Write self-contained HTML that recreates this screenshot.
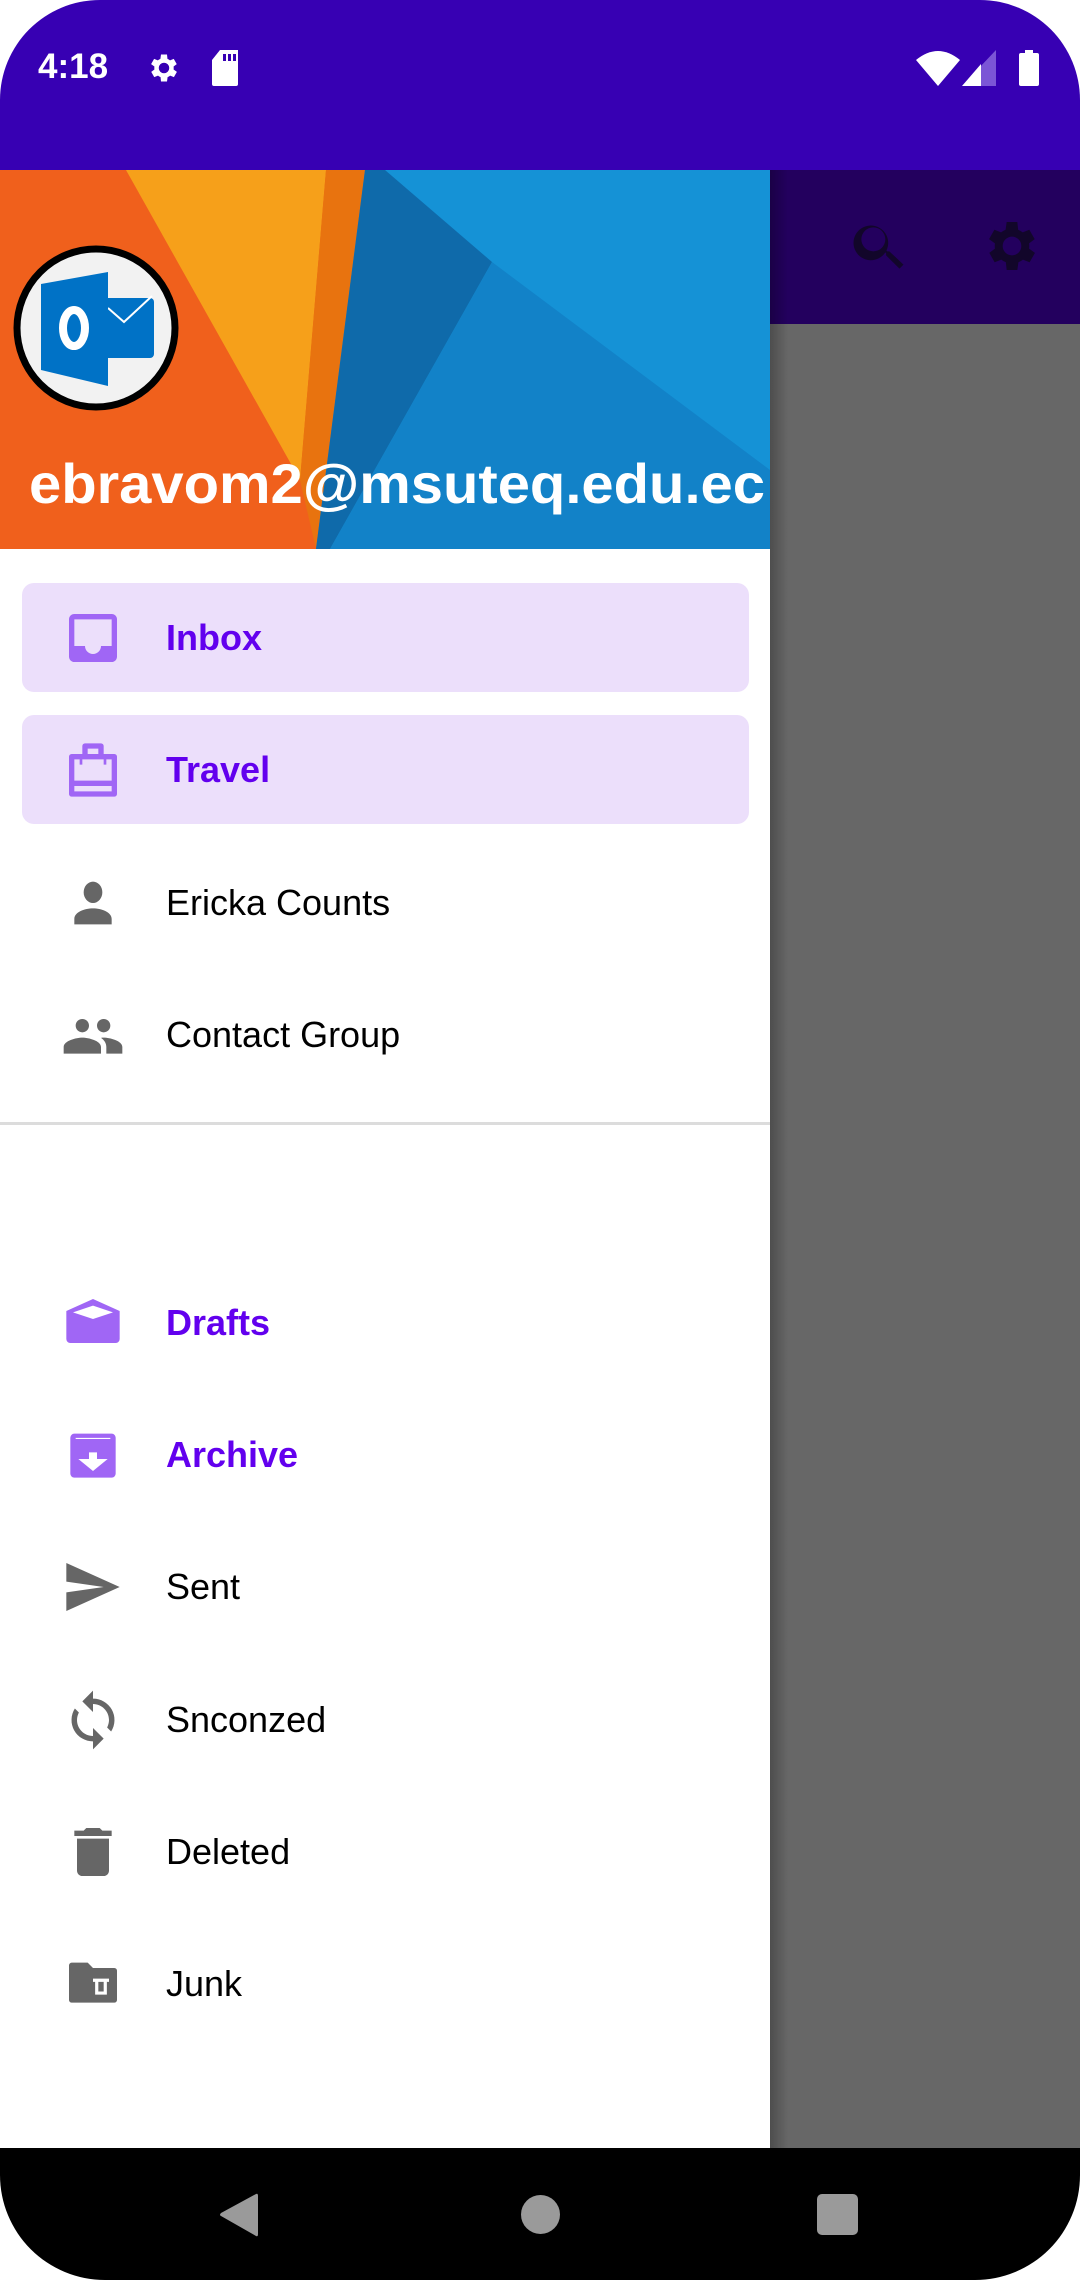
<!DOCTYPE html>
<html><head><meta charset="utf-8"><style>
html,body{margin:0;padding:0;background:#fff}
body{width:1080px;height:2280px;position:relative;overflow:hidden;font-family:"Liberation Sans",sans-serif}
.abs{position:absolute}
.item{position:absolute;left:0;width:770px;height:110px}
.item .t{position:absolute;left:166px;top:0;line-height:110px;font-size:36px;color:#000}
.item svg{position:absolute;left:61px;top:23px}
.sel{position:absolute;left:22px;width:727px;height:109px;background:#ecdffb;border-radius:12px}
.p .t{color:#6200ee;font-weight:bold}
</style></head><body>
<div class="abs" style="left:0;top:0;width:1080px;height:170px;background:#3700b3;border-radius:100px 100px 0 0"></div>
<div class="abs" style="left:38px;top:47px;color:#fff;font-size:35px;font-weight:bold">4:18</div>
<svg class="abs" style="left:146px;top:50px" width="36" height="36" viewBox="0 0 24 24"><path fill="#fff" d="M19.4 13a7.5 7.5 0 0 0 0-2l2.1-1.6-2-3.5-2.5 1a7 7 0 0 0-1.7-1L15 3h-4l-.4 2.9a7 7 0 0 0-1.7 1l-2.5-1-2 3.5L6.6 11a7.5 7.5 0 0 0 0 2l-2.1 1.6 2 3.5 2.5-1a7 7 0 0 0 1.7 1L11 21h4l.4-2.9a7 7 0 0 0 1.7-1l2.5 1 2-3.5zM13 15.5a3.5 3.5 0 1 1 0-7 3.5 3.5 0 0 1 0 7z" transform="translate(-1 0)"/></svg>
<svg class="abs" style="left:211px;top:50px" width="28" height="36" viewBox="0 0 28 36"><path fill="#fff" d="M9 0h18v34a2 2 0 0 1-2 2H3a2 2 0 0 1-2-2V10z"/><rect x="12" y="4" width="3" height="7" fill="#3700b3"/><rect x="17" y="4" width="3" height="7" fill="#3700b3"/><rect x="22" y="4" width="3" height="7" fill="#3700b3"/></svg>
<svg class="abs" style="left:915px;top:50px" width="46" height="36" viewBox="0 0 46 36"><path fill="#fff" d="M1 10Q23-8 45 10L23 36z"/></svg>
<svg class="abs" style="left:962px;top:50px" width="36" height="36" viewBox="0 0 36 36"><path fill="#7b55d6" d="M34 0v36H0z"/><path fill="#fff" d="M19 14v22H0z"/></svg>
<svg class="abs" style="left:1018px;top:50px" width="22" height="36" viewBox="0 0 22 36"><rect x="7" y="0" width="8" height="4" fill="#fff"/><rect x="1" y="3" width="20" height="33" rx="2" fill="#fff"/></svg>
<div class="abs" style="left:770px;top:170px;width:310px;height:154px;background:#23005e"></div>
<div class="abs" style="left:770px;top:324px;width:310px;height:1824px;background:#676767"></div>
<div class="abs" style="left:770px;top:170px;width:18px;height:1978px;background:linear-gradient(to right,rgba(0,0,0,.25),rgba(0,0,0,0))"></div>
<svg class="abs" style="left:848px;top:214px" width="64" height="64" viewBox="0 0 24 24"><path fill="#12062a" d="M15.5 14h-.8l-.3-.3A6.5 6.5 0 1 0 14 14.4l.3.3v.8l5 5 1.5-1.5zm-6 0a4.5 4.5 0 1 1 0-9 4.5 4.5 0 0 1 0 9z"/></svg>
<svg class="abs" style="left:980px;top:214px" width="64" height="64" viewBox="0 0 24 24"><path fill="#12062a" d="M19.4 13a7.5 7.5 0 0 0 0-2l2.1-1.6-2-3.5-2.5 1a7 7 0 0 0-1.7-1L15 3h-4l-.4 2.9a7 7 0 0 0-1.7 1l-2.5-1-2 3.5L6.6 11a7.5 7.5 0 0 0 0 2l-2.1 1.6 2 3.5 2.5-1a7 7 0 0 0 1.7 1L11 21h4l.4-2.9a7 7 0 0 0 1.7-1l2.5 1 2-3.5zM13 15.5a3.5 3.5 0 1 1 0-7 3.5 3.5 0 0 1 0 7z" transform="translate(-1 0)"/></svg>
<div class="abs" style="left:0;top:549px;width:770px;height:1599px;background:#fff"></div>
<svg class="abs" style="left:0;top:170px" width="770" height="379" viewBox="0 0 770 379">
<rect width="770" height="379" fill="#f0601c"/>
<polygon points="126,0 326,0 300,310" fill="#f6a01a"/>
<polygon points="326,0 365,0 316,379 300,310" fill="#e8730f"/>
<polygon points="365,0 770,0 770,379 316,379" fill="#1592d6"/>
<polygon points="365,0 385,0 492,92 330,379 316,379" fill="#0f6aaa"/>
<polygon points="492,92 770,300 770,379 330,379" fill="#1282c8"/>
<text x="29" y="333" font-family="Liberation Sans" font-weight="bold" font-size="56" fill="#fff" textLength="736" lengthAdjust="spacingAndGlyphs">ebravom2@msuteq.edu.ec</text>
</svg>
<svg class="abs" style="left:12px;top:244px" width="168" height="168" viewBox="0 0 168 168">
<circle cx="84" cy="84" r="79" fill="#f2f2f2" stroke="#000" stroke-width="7"/>
<rect x="92" y="54" width="50" height="60" rx="4" fill="#0072c6"/>
<polyline points="96,64 112,78 140,52" fill="none" stroke="#fff" stroke-width="2"/>
<polygon points="29,40 96,28 96,142 29,126" fill="#0072c6"/>
<ellipse cx="62" cy="84" rx="11" ry="18" fill="none" stroke="#fff" stroke-width="8"/>
</svg>
<div class="sel" style="top:583px"></div>
<div class="sel" style="top:715px"></div>
<div class="item p" style="top:583px"><svg width="64" height="64" viewBox="0 0 24 24"><path fill="#a066f5" d="M19 3H5a2 2 0 0 0-2 2v14a2 2 0 0 0 2 2h14a2 2 0 0 0 2-2V5a2 2 0 0 0-2-2zm0 12h-4a3 3 0 0 1-6 0H5V5h14z"/></svg><div class="t">Inbox</div></div>
<div class="item p" style="top:715px"><svg width="64" height="64" viewBox="0 0 24 24"><path fill="#a066f5" d="M9 2h6a1 1 0 0 1 1 1v3h4a1 1 0 0 1 1 1v14a1 1 0 0 1-1 1H4a1 1 0 0 1-1-1V7a1 1 0 0 1 1-1h4V3a1 1 0 0 1 1-1zm1 2v2h4V4zM5 8v8h14V8h-2v2h-1V8H8v2H7V8zm0 10v2h14v-2z"/></svg><div class="t">Travel</div></div>
<div class="item" style="top:848px"><svg width="64" height="64" viewBox="0 0 24 24"><path fill="#666" d="M12 12a3.5 4 0 1 0 0-8 3.5 4 0 0 0 0 8zm0 2c-3 0-7 1.3-7 4v2h14v-2c0-2.7-4-4-7-4z"/></svg><div class="t">Ericka Counts</div></div>
<div class="item" style="top:980px"><svg width="64" height="64" viewBox="0 0 24 24"><path fill="#666" d="M16 11c1.4 0 2.5-1.1 2.5-2.5S17.4 6 16 6s-2.5 1.1-2.5 2.5S14.6 11 16 11zm-8 0c1.4 0 2.5-1.1 2.5-2.5S9.4 6 8 6 5.5 7.1 5.5 8.5 6.6 11 8 11zm0 2c-2.3 0-7 1.2-7 3.5V19h14v-2.5C15 14.2 10.3 13 8 13zm8 0c-.3 0-.6 0-1 .1 1.2.8 2 2 2 3.4V19h6v-2.5c0-2.3-4.7-3.5-7-3.5z"/></svg><div class="t">Contact Group</div></div>
<div class="abs" style="left:0;top:1122px;width:770px;height:3px;background:#dcdcdc"></div>
<div class="item p" style="top:1268px"><svg width="64" height="64" viewBox="0 0 24 24"><path fill="#a066f5" d="M12 3 2 7.5V18a1.5 1.5 0 0 0 1.5 1.5h17A1.5 1.5 0 0 0 22 18V7.5zm0 7.5L4.5 8 12 5.5 19.5 8z"/></svg><div class="t">Drafts</div></div>
<div class="item p" style="top:1400px"><svg width="64" height="64" viewBox="0 0 24 24"><path fill="#a066f5" d="M5 4h14a1.5 1.5 0 0 1 1.5 1.5V19a1.5 1.5 0 0 1-1.5 1.5H5A1.5 1.5 0 0 1 3.5 19V5.5A1.5 1.5 0 0 1 5 4zm.5 1.6v.4h13v-.4zM10.5 11v2.5h-4L12 18l5.5-4.5h-4V11z"/></svg><div class="t">Archive</div></div>
<div class="item" style="top:1532px"><svg width="64" height="64" viewBox="0 0 24 24"><path fill="#666" d="M2 3l20 9-20 9v-7l14-2-14-2z"/></svg><div class="t">Sent</div></div>
<div class="item" style="top:1665px"><svg width="64" height="64" viewBox="0 0 24 24"><path fill="#666" d="M12 4V1L8 5l4 4V6c3.3 0 6 2.7 6 6 0 1-.3 2-.7 2.8l1.5 1.5A8 8 0 0 0 12 4zm0 14c-3.3 0-6-2.7-6-6 0-1 .3-2 .7-2.8L5.2 7.7A8 8 0 0 0 12 20v3l4-4-4-4z"/></svg><div class="t">Snconzed</div></div>
<div class="item" style="top:1797px"><svg width="64" height="64" viewBox="0 0 24 24"><path fill="#666" d="M6 19a2 2 0 0 0 2 2h8a2 2 0 0 0 2-2V7H6zM19 4h-3.5l-1-1h-5l-1 1H5v2h14z"/></svg><div class="t">Deleted</div></div>
<div class="item" style="top:1929px"><svg width="64" height="64" viewBox="0 0 24 24"><path fill="#666" d="M3 5a1 1 0 0 1 1-1h6l2 2h8a1 1 0 0 1 1 1v11a1 1 0 0 1-1 1H4a1 1 0 0 1-1-1z"/><path fill="#fff" d="M12 10h6v1.2h-.8V16h-4.4v-4.8H12zm2 1.2V14.8h2v-3.6z"/></svg><div class="t">Junk</div></div>
<div class="abs" style="left:0;top:2148px;width:1080px;height:132px;background:#000;border-radius:0 0 105px 105px"></div>
<svg class="abs" style="left:218px;top:2192px" width="42" height="46" viewBox="0 0 42 46"><path fill="#9a9a9a" d="M38 2Q40 1 40 4V42Q40 45 38 44L3 24Q1 23 3 21z"/></svg>
<div class="abs" style="left:521px;top:2195px;width:39px;height:39px;border-radius:50%;background:#9a9a9a"></div>
<div class="abs" style="left:817px;top:2194px;width:41px;height:41px;border-radius:5px;background:#9a9a9a"></div>
</body></html>
